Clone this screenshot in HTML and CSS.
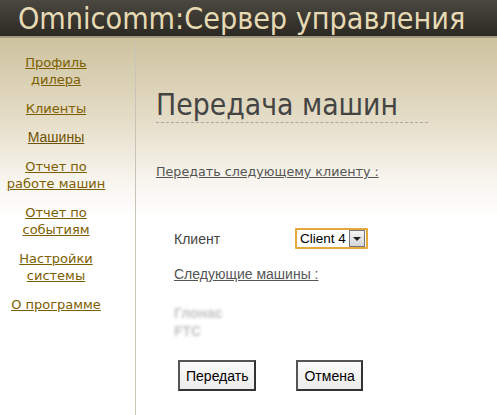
FILE: index.html
```html
<!DOCTYPE html>
<html lang="ru">
<head>
<meta charset="utf-8">
<title>Omnicomm:Сервер управления</title>
<link rel="stylesheet" href="styles.css">
</head>
<body>
<header class="top">
  <h1 class="brand">Omnicomm:Сервер управления</h1>
</header>
<div class="page">
  <nav class="side">
    <a href="#" class="nav-link">Профиль<br>дилера</a>
    <a href="#" class="nav-link">Клиенты</a>
    <a href="#" class="nav-link nav-active">Машины</a>
    <a href="#" class="nav-link">Отчет по<br>работе машин</a>
    <a href="#" class="nav-link">Отчет по<br>событиям</a>
    <a href="#" class="nav-link">Настройки<br>системы</a>
    <a href="#" class="nav-link">О программе</a>
  </nav>
  <main class="content">
    <h2 class="title">Передача машин</h2>
    <p class="section-label">Передать следующему клиенту :</p>
    <div class="form">
      <div class="row">
        <span class="field-label">Клиент</span>
        <div class="select">
          <span class="select-value">Client 4</span>
          <span class="select-btn"><span class="arrow"></span></span>
        </div>
      </div>
      <p class="sub-label">Следующие машины :</p>
      <div class="cars">
        <div>Глонас</div>
        <div>FTC</div>
      </div>
      <div class="buttons">
        <button class="btn">Передать</button>
        <button class="btn">Отмена</button>
      </div>
    </div>
  </main>
</div>
</body>
</html>
```
FILE: styles.css
```css
html, body {
  margin: 0;
  padding: 0;
  height: 100%;
}
body {
  background: #fff;
  font-family: "DejaVu Sans", Verdana, sans-serif;
}
.top {
  height: 36px;
  background: linear-gradient(#4b4741, #2c2822);
  border-bottom: 2px solid #a39b85;
  overflow: hidden;
}
.brand {
  margin: 0;
  padding-left: 18px;
  font-family: "DejaVu Sans Condensed", "DejaVu Sans", sans-serif;
  font-weight: normal;
  font-size: 30.2px;
  line-height: 38px;
  color: #e6dab4;
  white-space: nowrap;
}
.page {
  display: flex;
  min-height: 377px;
  background: linear-gradient(#cec3a0 0px, #e4dcc6 80px, #f7f4ed 140px, #ffffff 180px);
}
.side {
  width: 112px;
  flex: none;
  padding-right: 23px;
  border-right: 1px solid #c9c4b8;
  margin-top: 3px;
  padding-top: 13px;
  display: flex;
  flex-direction: column;
  align-items: center;
  gap: 12px;
}
.nav-link {
  display: block;
  text-align: center;
  font-family: "DejaVu Sans", Verdana, sans-serif;
  font-size: 13px;
  line-height: 17px;
  color: #7d5e00;
  text-decoration: underline;
  white-space: nowrap;
}
.nav-active {
  font-family: "Liberation Sans", Arial, sans-serif;
  font-size: 14px;
  color: #6e5200;
}
.content {
  flex: 1;
  padding-left: 20px;
}
.title {
  margin: 50px 0 0;
  display: inline-block;
  font-family: "DejaVu Sans Condensed", "DejaVu Sans", sans-serif;
  font-weight: normal;
  font-size: 29.8px;
  line-height: 34px;
  color: #444;
  padding: 0 30px 0 0;
  border-bottom: 1px dashed #a8a8a8;
}
.section-label {
  margin: 40px 0 0;
  font-family: "DejaVu Sans", Verdana, sans-serif;
  font-size: 12.7px;
  line-height: 17px;
  color: #555;
  text-decoration: underline;
}
.form {
  padding-left: 18px;
  padding-top: 48px;
  font-family: "Liberation Sans", Arial, sans-serif;
  font-size: 14px;
  color: #444;
}
.row {
  display: flex;
  align-items: center;
}
.field-label {
  width: 121px;
}
.select {
  display: flex;
  align-items: center;
  height: 17px;
  border: 2px solid #e6a83a;
  border-radius: 1px;
  background: #fff;
  padding: 0 1px 0 3px;
}
.select-value {
  color: #000;
  font-size: 13.5px;
  line-height: 17px;
  padding-right: 3px;
}
.select-btn {
  width: 14px;
  height: 15px;
  border: 1px solid #777;
  background: linear-gradient(#f4f4f4, #d6d6d6);
  display: flex;
  align-items: center;
  justify-content: center;
}
.arrow {
  width: 0;
  height: 0;
  border-left: 4px solid transparent;
  border-right: 4px solid transparent;
  border-top: 4px solid #222;
}
.sub-label {
  margin: 17px 0 0;
  color: #555;
  text-decoration: underline;
  line-height: 17px;
}
.cars {
  margin-top: 21px;
  font-weight: bold;
  font-size: 14px;
  line-height: 18px;
  color: #c2c2c2;
  filter: blur(1.4px);
}
.buttons {
  margin-top: 20px;
  padding-left: 4px;
  display: flex;
  gap: 40px;
}
.btn {
  font-family: "Liberation Sans", Arial, sans-serif;
  font-size: 14px;
  color: #000;
  height: 31px;
  padding: 0 6px;
  border: 2px solid;
  border-color: #555 #333 #333 #555;
  background: linear-gradient(#fbfbfb, #ececec);
  border-radius: 0;
}
```
